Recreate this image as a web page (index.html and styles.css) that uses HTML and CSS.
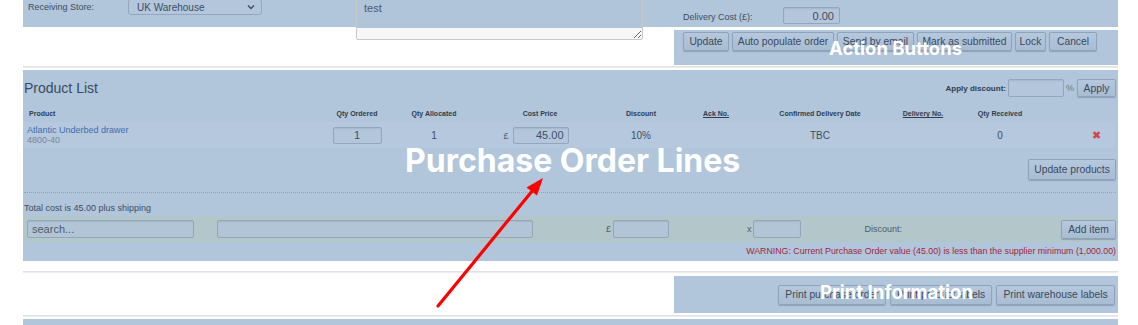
FILE: index.html
```html
<!DOCTYPE html>
<html lang="en">
<head>
  <meta charset="UTF-8" />
  <title>Purchase Order</title>
  <link rel="stylesheet" href="styles.css">
</head>
<body>

<div class="page">
  <!-- Store / notes / delivery -->
  <div class="store-row">
    <span class="lbl store-lbl">Receiving Store:</span>
    <div class="select">
      <span>UK Warehouse</span>
      <svg width="8" height="6" viewBox="0 0 8 6"><path d="M1 1.5 L4 4.5 L7 1.5" fill="none" stroke="#3e4e63" stroke-width="1.4"/></svg>
    </div>
    <textarea class="notes">test</textarea>
    <div class="delivery">
      <span class="lbl delivery-lbl">Delivery Cost (£):</span>
      <input class="field cost" type="text" value="0.00">
    </div>
  </div>

  <!-- Action buttons -->
  <div class="actions">
    <button class="b-update">Update</button>
    <button class="b-auto">Auto populate order</button>
    <button class="b-email">Send by email</button>
    <button class="b-mark">Mark as submitted</button>
    <button class="b-lock">Lock</button>
    <button class="b-cancel">Cancel</button>
  </div>

  <div class="sep"></div>

  <!-- Product list -->
  <div class="products">
    <div class="title-row">
      <h2>Product List</h2>
      <div class="discount">
        <span class="bold-lbl">Apply discount:</span>
        <input class="field disc" type="text">
        <span class="pct">%</span>
        <button class="apply">Apply</button>
      </div>
    </div>

    <table class="lines">
      <colgroup>
        <col style="width:292px"><col style="width:84px"><col style="width:70px"><col style="width:142px">
        <col style="width:60px"><col style="width:90px"><col style="width:118px"><col style="width:88px">
        <col style="width:66px"><col>
      </colgroup>
      <thead>
        <tr>
          <th class="left">Product</th>
          <th>Qty Ordered</th>
          <th>Qty Allocated</th>
          <th>Cost Price</th>
          <th>Discount</th>
          <th class="u">Ack No.</th>
          <th>Confirmed Delivery Date</th>
          <th class="u">Delivery No.</th>
          <th>Qty Received</th>
          <th></th>
        </tr>
      </thead>
      <tbody>
        <tr>
          <td class="left">
            <a class="prod-link">Atlantic Underbed drawer</a>
            <div class="sku">4800-40</div>
          </td>
          <td><input class="field qty" type="text" value="1"></td>
          <td class="blue">1</td>
          <td class="price-cell"><span class="cur">£</span><input class="field price" type="text" value="45.00"></td>
          <td>10%</td>
          <td></td>
          <td>TBC</td>
          <td></td>
          <td>0</td>
          <td class="del">&#10006;</td>
        </tr>
      </tbody>
    </table>

    <div class="update-row"><button class="update-products">Update products</button></div>

    <div class="dash"></div>

    <div class="total">Total cost is 45.00 plus shipping</div>

    <div class="add-row">
      <input class="field search" type="text" placeholder="search...">
      <input class="field desc" type="text">
      <span class="cur pound">£</span>
      <input class="field add-price" type="text">
      <span class="cur times">x</span>
      <input class="field add-qty" type="text">
      <span class="disc-lbl">Discount:</span>
      <button class="add-item">Add item</button>
    </div>

    <div class="warning">WARNING: Current Purchase Order value (45.00) is less than the supplier minimum (1,000.00)</div>
  </div>

  <div class="sep low"></div>

  <!-- Print -->
  <div class="print">
    <button class="p-order">Print purchase order</button>
    <button class="p-labels">Print product labels</button>
    <button class="p-ware">Print warehouse labels</button>
  </div>

  <div class="sep tight"></div>

  <div class="next-band"></div>
</div>

<!-- annotations -->
<div class="note note-actions">Action Buttons</div>
<div class="note note-lines">Purchase Order Lines</div>
<div class="note note-print">Print Information</div>
<svg class="arrow" width="1138" height="325" viewBox="0 0 1138 325">
  <line x1="438" y1="306" x2="533" y2="190" stroke="#ff0000" stroke-width="3.2" stroke-linecap="round"/>
  <polygon points="543,178 526.5,187.5 537,195.5" fill="#ff0000"/>
</svg>

</body>
</html>
```

FILE: styles.css
```css
* { margin: 0; padding: 0; box-sizing: border-box; }

body {
  font-family: 'Liberation Sans', Arial, sans-serif;
  background: #fff;
  color: #3e4e63;
  width: 1138px;
  height: 325px;
  overflow: hidden;
  position: relative;
  padding-left: 23px;
}

.page {
  width: 1095px;
}

.lbl {
  font-size: 9px;
  color: #3e4e63;
}

.field {
  font-family: 'Liberation Sans', Arial, sans-serif;
  background: #b3c6db;
  border: 1px solid #93a6bd;
  border-radius: 2px;
  font-size: 11px;
  color: #3e4e63;
  outline: none;
  box-shadow: inset 0 1px 1px rgba(60, 80, 110, 0.12);
}

button {
  font-family: 'Liberation Sans', Arial, sans-serif;
  font-size: 10.3px;
  color: #3b4a5d;
  background: linear-gradient(#b5c8dd, #a8bcd2);
  border: 1px solid #8fa3bb;
  border-radius: 2px;
  padding: 0;
  box-shadow: 0 1px 1px rgba(60, 80, 110, 0.3);
  cursor: pointer;
  white-space: nowrap;
}

/* top row */
.store-row {
  height: 27px;
  background: #b1c5db;
  display: flex;
  align-items: flex-start;
  padding-left: 5px;
}

.store-lbl {
  width: 100px;
  line-height: 12px;
  padding-top: 1px;
}

.select {
  width: 134px;
  height: 16px;
  margin-top: -1px;
  border: 1px solid #93a6bd;
  border-radius: 3px;
  background: #b3c6db;
  font-size: 10px;
  color: #3e4e63;
  display: flex;
  align-items: center;
  justify-content: space-between;
  padding: 0 6px 0 8px;
}

.notes {
  width: 287px;
  height: 48px;
  margin-top: -8px;
  margin-left: 94px;
  border: 1px solid #c8c8c8;
  border-radius: 2px;
  background: linear-gradient(#b0c4da 0, #b0c4da 35px, #f7f7f7 35px);
  font-family: 'Liberation Sans', Arial, sans-serif;
  font-size: 11px;
  color: #4d5c6e;
  padding: 9px 7px;
  resize: vertical;
  outline: none;
}

.delivery {
  margin-left: 40px;
  margin-top: 7px;
  height: 17px;
  display: flex;
  align-items: center;
}

.delivery-lbl {
  width: 100px;
  padding-top: 2px;
}

.cost {
  width: 57px;
  height: 17px;
  text-align: right;
  padding-right: 5px;
}

/* action buttons */
.actions {
  margin: 3px 0 0 651px;
  height: 35px;
  background: #b1c5db;
  display: flex;
  gap: 3px;
  padding: 2px 0 0 9px;
  align-items: flex-start;
}

.actions button {
  height: 19px;
}

.b-update { width: 46px; }
.b-auto { width: 102px; }
.b-email { width: 77px; }
.b-mark { width: 95px; }
.b-lock { width: 31px; }
.b-cancel { width: 48px; }

.sep {
  height: 2px;
  margin: 1px 0 2px;
  border-top: 1px solid #e2e2e2;
  border-bottom: 1px solid #ececec;
}

.sep.low {
  margin: 10px 0 3px;
}

.sep.tight {
  margin: 2px 0 2px;
}

/* product list */
.products {
  height: 191px;
  background: #b1c5db;
  padding: 0 2px 0 1px;
}

.title-row {
  display: flex;
  justify-content: space-between;
  align-items: center;
  padding-top: 8px;
  height: 27px;
}

h2 {
  font-size: 14px;
  font-weight: normal;
  color: #3a4b60;
}

.discount {
  display: flex;
  align-items: center;
  height: 18px;
  margin-top: 1px;
}

.bold-lbl {
  font-size: 8px;
  font-weight: bold;
  color: #2f3d50;
  margin-right: 2px;
}

.disc {
  width: 56px;
  height: 18px;
}

.pct {
  font-size: 9px;
  color: #6b7a8c;
  margin: 0 3px 0 2px;
}

.apply {
  height: 18px;
  width: 39px;
}

.lines {
  margin-top: 8px;
  width: 1092px;
  table-layout: fixed;
  border-collapse: collapse;
  margin-left: -1px;
}

.lines th {
  height: 17px;
  font-size: 7px;
  font-weight: bold;
  color: #2f3d50;
  text-align: center;
  white-space: nowrap;
}

.lines th.u {
  text-decoration: underline;
}

.lines .left {
  text-align: left;
  padding-left: 6px;
}

.lines td {
  height: 26px;
  background: #b5c8dd;
  text-align: center;
  font-size: 10px;
  color: #3e4e63;
  white-space: nowrap;
}

.lines td.left {
  padding-left: 4px;
  line-height: 10px;
}

.prod-link {
  color: #3d6fae;
  font-size: 9px;
}

.sku {
  color: #7a8797;
  font-size: 9px;
}

.qty {
  width: 49px;
  height: 17px;
  text-align: center;
}

.blue {
  color: #3d6fae;
}

.cur {
  font-size: 9px;
  color: #4d5c6e;
  margin-right: 4px;
}

.lines td.price-cell {
  padding-right: 8px;
}

.price {
  width: 56px;
  height: 17px;
  text-align: right;
  padding-right: 4px;
}

.lines td.del {
  text-align: right;
  padding-right: 14px;
  color: #d0454e;
  font-size: 11px;
}

.update-row {
  display: flex;
  justify-content: flex-end;
  margin-top: 11px;
}

.update-products {
  height: 21px;
  width: 88px;
}

.dash {
  margin-top: 12px;
  border-top: 1px dotted #8fa3bb;
}

.total {
  font-size: 9px;
  line-height: 12px;
  padding-top: 9px;
  color: #3e4e63;
}

.add-row {
  margin-top: 2px;
  height: 26px;
  background: #b3c6c9;
  display: flex;
  align-items: center;
  padding-left: 3px;
}

.add-row .field {
  background: #b2c5d6;
}

.search {
  width: 167px;
  height: 18px;
  padding-left: 4px;
}

.search::placeholder {
  color: #4d5c6e;
}

.desc {
  width: 316px;
  height: 18px;
  margin-left: 23px;
}

.pound {
  margin-left: 73px;
  margin-right: 2px;
}

.add-price {
  width: 56px;
  height: 18px;
}

.times {
  margin-left: 78px;
  margin-right: 1px;
}

.add-qty {
  width: 48px;
  height: 18px;
}

.disc-lbl {
  font-size: 9px;
  color: #4d5c6e;
  margin-left: 64px;
}

.add-item {
  margin-left: auto;
  width: 55px;
  height: 19px;
}

.warning {
  text-align: right;
  font-size: 8.8px;
  line-height: 12px;
  margin-top: 3px;
  color: #a2283a;
}

/* print */
.print {
  margin-left: 651px;
  height: 37px;
  background: #b1c5db;
  display: flex;
  justify-content: flex-end;
  align-items: center;
  gap: 4px;
  padding-right: 3px;
}

.print button {
  height: 20px;
}

.p-order { width: 108px; }
.p-labels { width: 102px; }
.p-ware { width: 119px; }

.next-band {
  height: 10px;
  background: #b1c5db;
}

/* annotations */
.note {
  position: absolute;
  font-family: Inter, 'Noto Sans', sans-serif;
  font-weight: 700;
  color: #fff;
  white-space: nowrap;
}

.note-actions {
  left: 829px;
  top: 37px;
  font-size: 18.5px;
}

.note-lines {
  left: 405px;
  top: 141px;
  font-size: 32px;
}

.note-print {
  left: 820px;
  top: 281px;
  font-size: 18.6px;
}

.arrow {
  position: absolute;
  left: 0;
  top: 0;
}
```
